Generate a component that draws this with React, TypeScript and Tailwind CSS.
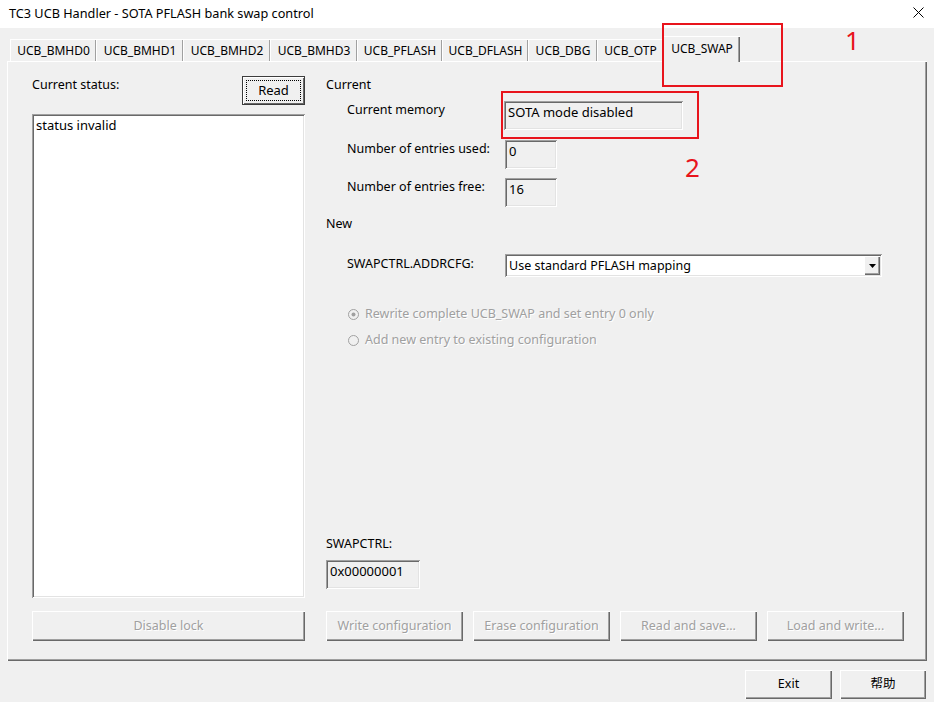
import React from "react";

const raised =
  "bg-[#f0f0f0] shadow-[inset_1px_1px_0_#ffffff,inset_-1px_-1px_0_#696969,inset_-2px_-2px_0_#a0a0a0]";
const sunken =
  "shadow-[inset_1px_1px_0_#a0a0a0,inset_-1px_-1px_0_#ffffff,inset_2px_2px_0_#696969,inset_-2px_-2px_0_#e3e3e3]";
const disabledText = "text-[#a0a0a0] [text-shadow:1px_1px_0_#ffffff]";

const tabs = [
  { label: "UCB_BMHD0", w: "w-[86px]" },
  { label: "UCB_BMHD1", w: "w-[87px]" },
  { label: "UCB_BMHD2", w: "w-[87px]" },
  { label: "UCB_BMHD3", w: "w-[87px]" },
  { label: "UCB_PFLASH", w: "w-[85px]" },
  { label: "UCB_DFLASH", w: "w-[86px]" },
  { label: "UCB_DBG", w: "w-[69px]" },
  { label: "UCB_OTP", w: "w-[66px]" },
];

function Radio({ checked, label }: { checked?: boolean; label: string }) {
  return (
    <div className="flex items-center gap-[6px] ml-[22px] h-[18px]">
      <svg width="11" height="11" viewBox="0 0 11 11">
        <circle cx="5.5" cy="5.5" r="5" fill="#f0f0f0" stroke="#a0a0a0" />
        {checked && <circle cx="5.5" cy="5.5" r="2" fill="#a0a0a0" />}
      </svg>
      <span className={disabledText}>{label}</span>
    </div>
  );
}

function ActionButton({ label, className = "" }: { label: string; className?: string }) {
  return (
    <div className={`${raised} h-[30px] flex items-center justify-center ${disabledText} ${className}`}>
      {label}
    </div>
  );
}

function Field({ value, w }: { value: string; w: string }) {
  return (
    <div className={`${sunken} ${w} h-[29px] pl-[4px] pt-[2px] leading-[18px] text-[13px]`}>{value}</div>
  );
}

export default function App() {
  return (
    <div className="w-[934px] h-[702px] bg-[#f0f0f0] relative overflow-hidden text-[12.5px] text-black font-['Noto_Sans','Noto_Sans_CJK_SC',sans-serif]">
      {/* title bar */}
      <div className="h-[28px] bg-white flex items-center pl-[9px] pr-[10px]">
        <span className="text-[12.7px] leading-[18px] -mt-[2px]">
          TC3 UCB Handler - SOTA PFLASH bank swap control
        </span>
        <svg className="ml-auto -mt-[3px]" width="11" height="11" viewBox="0 0 11 11">
          <path d="M0.5 0.5L10.5 10.5M10.5 0.5L0.5 10.5" stroke="#000" strokeWidth="1" />
        </svg>
      </div>

      {/* tab strip */}
      <div className="h-[33px] flex items-end pl-[10px] text-[12px]">
        {tabs.map((t) => (
          <div
            key={t.label}
            className={`${t.w} h-[22px] flex items-center justify-center border-t border-l border-white shadow-[inset_-1px_0_0_#a0a0a0]`}
          >
            {t.label}
          </div>
        ))}
        <div className="w-[77px] h-[26px] -mb-[1px] relative z-10 bg-[#f0f0f0] flex items-start justify-center pt-[3px] border-t border-l border-white shadow-[inset_-1px_0_0_#696969,inset_-2px_0_0_#a0a0a0]">
          UCB_SWAP
        </div>
      </div>

      {/* tab page */}
      <div className={`${raised} mx-[7px] h-[600px] flex pl-[25px] pt-[15px] pb-[20px]`}>
        <div className="w-[273px] flex flex-col">
          <div className="h-[29px] flex items-start">
            <span className="leading-[18px]">Current status:</span>
            <div className="ml-auto w-[63px] h-[29px] border border-[#3c3c3c] p-[3px] flex shadow-[inset_1px_1px_0_#ffffff,inset_-1px_-1px_0_#696969]">
              <span className="flex-1 border border-dotted border-black flex items-center justify-center text-[13px]">
                Read
              </span>
            </div>
          </div>
          <div className={`${sunken} bg-white flex-1 mt-[9px] pl-[4px] pt-[2px] leading-[18px] text-[13px]`}>
            status invalid
          </div>
          <ActionButton label="Disable lock" className="mt-[13px]" />
        </div>

        <div className="ml-[21px] w-[579px] flex flex-col">
          <div className="h-[18px] leading-[18px]">Current</div>
          <div className="flex mt-[7px]">
            <span className="ml-[21px] w-[157px] leading-[18px]">Current memory</span>
            <Field value="SOTA mode disabled" w="w-[179px]" />
          </div>
          <div className="flex mt-[10px]">
            <span className="ml-[21px] w-[158px] leading-[18px]">Number of entries used:</span>
            <Field value="0" w="w-[52px]" />
          </div>
          <div className="flex mt-[9px]">
            <span className="ml-[21px] w-[158px] leading-[18px]">Number of entries free:</span>
            <Field value="16" w="w-[52px]" />
          </div>
          <div className="h-[18px] leading-[18px] mt-[8px]">New</div>
          <div className="flex items-start mt-[21px]">
            <span className="ml-[21px] w-[158px] leading-[18px] mt-[1px]">SWAPCTRL.ADDRCFG:</span>
            <div className={`${sunken} bg-white w-[377px] h-[23px] flex p-[2px]`}>
              <span className="flex-1 pl-[2px] leading-[19px]">Use standard PFLASH mapping</span>
              <div className={`${raised} w-[16px] flex items-center justify-center`}>
                <svg width="7" height="4" viewBox="0 0 7 4">
                  <path d="M0 0H7L3.5 4Z" fill="#000" />
                </svg>
              </div>
            </div>
          </div>
          <div className="mt-[28px]">
            <Radio checked label="Rewrite complete UCB_SWAP and set entry 0 only" />
          </div>
          <div className="mt-[8px]">
            <Radio label="Add new entry to existing configuration" />
          </div>
          <div className="flex-1" />
          <div className="h-[18px] leading-[18px]">SWAPCTRL:</div>
          <div className="mt-[7px]">
            <Field value="0x00000001" w="w-[94px]" />
          </div>
          <div className="flex gap-[10px] mt-[22px]">
            <ActionButton label="Write configuration" className="w-[137px]" />
            <ActionButton label="Erase configuration" className="w-[137px]" />
            <ActionButton label="Read and save..." className="w-[137px]" />
            <ActionButton label="Load and write..." className="w-[137px]" />
          </div>
        </div>
      </div>

      {/* dialog buttons */}
      <div className="flex justify-end gap-[8px] pr-[8px] pt-[9px]">
        <div className={`${raised} w-[87px] h-[29px] flex items-center justify-center`}>Exit</div>
        <div className={`${raised} w-[86px] h-[29px] flex items-center justify-center`}>帮助</div>
      </div>

      {/* red callouts */}
      <div className="absolute left-[662px] top-[23px] w-[121px] h-[64px] border-2 border-[#e8141c] z-20" />
      <div className="absolute left-[845px] top-[27px] text-[26px] leading-none text-[#e8141c]">1</div>
      <div className="absolute left-[501px] top-[91px] w-[198px] h-[48px] border-2 border-[#e8141c] z-20" />
      <div className="absolute left-[685px] top-[154px] text-[26px] leading-none text-[#e8141c]">2</div>
    </div>
  );
}
